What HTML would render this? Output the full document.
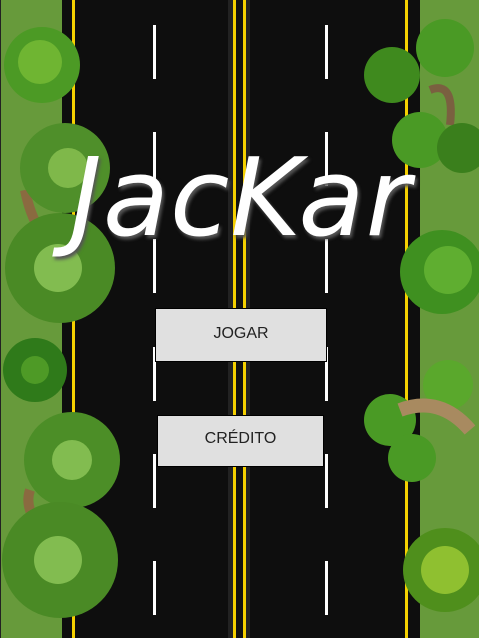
<!DOCTYPE html>
<html><head><meta charset="utf-8"><style>
*{margin:0;padding:0}
body{width:479px;height:638px;overflow:hidden;position:relative;background:#679a3b;font-family:"Liberation Sans",sans-serif}
.a{position:absolute}
.road{left:62px;top:0;width:358px;height:638px;background:#0e0e0e}
.y{top:0;height:638px;width:3px;background:#f5d000}
.d{width:3px;height:54px;background:#fff}
.btn{background:#e0e0e0;border:1px solid #000;box-sizing:border-box;text-align:center;font-size:16px;color:#222}
.title{left:70px;top:136px;font-family:"DejaVu Sans",sans-serif;font-style:italic;font-size:108px;color:#fff;letter-spacing:1px;text-shadow:2px 3px 3px #555;font-weight:300;white-space:nowrap}
</style></head><body>
<div class="a" style="left:0;top:0;width:1px;height:638px;background:#222"></div>
<div class="a road"></div>
<div class="a" style="left:228px;top:0;width:22px;height:638px;background:#222"></div>
<div class="a y" style="left:72px"></div>
<div class="a y" style="left:233px"></div>
<div class="a y" style="left:243px"></div>
<div class="a y" style="left:405px"></div>
<div class="a" style="left:236px;top:0;width:7px;height:638px;background:#111"></div>
<div class="a d" style="left:153px;top:25px"></div><div class="a d" style="left:325px;top:25px"></div>
<div class="a d" style="left:153px;top:132px"></div><div class="a d" style="left:325px;top:132px"></div>
<div class="a d" style="left:153px;top:239px"></div><div class="a d" style="left:325px;top:239px"></div>
<div class="a d" style="left:153px;top:347px"></div><div class="a d" style="left:325px;top:347px"></div>
<div class="a d" style="left:153px;top:454px"></div><div class="a d" style="left:325px;top:454px"></div>
<div class="a d" style="left:153px;top:561px"></div><div class="a d" style="left:325px;top:561px"></div>
<svg class="a" style="left:0;top:0" width="479" height="638">
<g fill="#3f8a1e">
<circle cx="42" cy="65" r="38" fill="#4c9a25"/><circle cx="40" cy="62" r="22" fill="#6fb532"/>
<path d="M25 190 Q30 215 40 230" stroke="#8a6a40" stroke-width="10" fill="none"/>
<circle cx="65" cy="168" r="45" fill="#4f8f2a"/><circle cx="68" cy="168" r="20" fill="#7fb84a"/>
<circle cx="60" cy="268" r="55" fill="#4a8a25"/><circle cx="58" cy="268" r="24" fill="#82bc50"/>
<circle cx="35" cy="370" r="32" fill="#2f7a1a"/><circle cx="35" cy="370" r="14" fill="#4e9a26"/>
<path d="M30 490 Q25 505 35 520" stroke="#8a6a40" stroke-width="10" fill="none"/>
<circle cx="72" cy="460" r="48" fill="#4c8e27"/><circle cx="72" cy="460" r="20" fill="#82bc50"/>
<circle cx="60" cy="560" r="58" fill="#4a8a25"/><circle cx="58" cy="560" r="24" fill="#82bc50"/>
<path d="M430 90 Q455 80 450 125" stroke="#7a6040" stroke-width="8" fill="none"/>
<circle cx="392" cy="75" r="28" fill="#3f8a1e"/><circle cx="445" cy="48" r="29" fill="#4a9a25"/>
<circle cx="420" cy="140" r="28" fill="#4a9a25"/><circle cx="462" cy="148" r="25" fill="#3a7f1c"/>
<circle cx="442" cy="272" r="42" fill="#3f9020"/><circle cx="448" cy="270" r="24" fill="#5fae30"/>
<circle cx="390" cy="420" r="26" fill="#4a9a25"/><circle cx="448" cy="385" r="25" fill="#5aa82c"/><circle cx="412" cy="458" r="24" fill="#4a9a25"/>
<path d="M400 410 Q440 395 470 430" stroke="#a88a60" stroke-width="14" fill="none"/>
<circle cx="445" cy="570" r="42" fill="#4f8f1c"/><circle cx="445" cy="570" r="24" fill="#8fc030"/>
</g></svg>
<div class="a title">JacKar</div>
<div class="a btn" style="left:155px;top:308px;width:172px;height:54px;line-height:50px">JOGAR</div>
<div class="a btn" style="left:157px;top:415px;width:167px;height:52px;line-height:46px">CRÉDITO</div>
</body></html>
